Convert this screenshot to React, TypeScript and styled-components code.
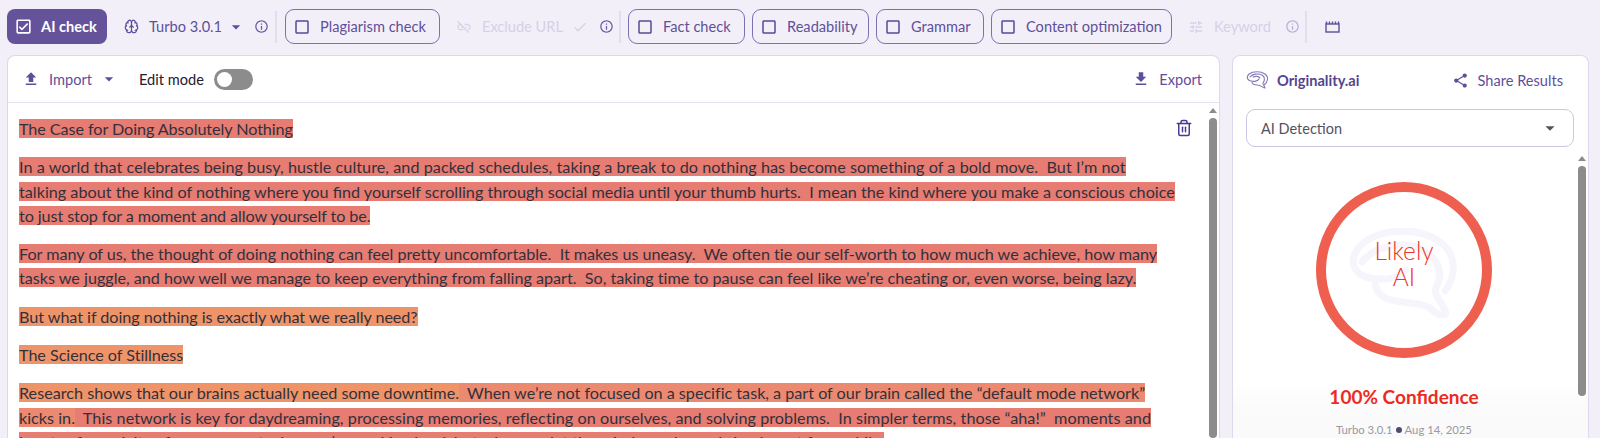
import React from "react";
import styled, { createGlobalStyle } from "styled-components";
import {
  MdArrowDropDown,
  MdCheck,
  MdCheckBoxOutlineBlank,
  MdFileDownload,
  MdFileUpload,
  MdInfoOutline,
  MdLinkOff,
  MdOutlineCheckBox,
  MdShare,
  MdTune,
} from "react-icons/md";
import { Brain, Trash2 } from "lucide-react";

const GlobalStyle = createGlobalStyle`
  html, body {
    margin: 0;
    padding: 0;
    height: 438px;
    overflow: hidden;
    background: #f2eff8;
    font-family: "Lato", "Open Sans", sans-serif;
  }
`;

const Page = styled.div`
  width: 1600px;
  height: 438px;
  overflow: hidden;
  background: #f2eff8;
`;

const Toolbar = styled.div`
  height: 55px;
  box-sizing: border-box;
  padding: 9px 0 0 7px;
  display: flex;
  align-items: flex-start;
  color: #5f4f9a;
  font-size: 14.6px;
`;

const PrimaryButton = styled.div`
  width: 100px;
  height: 35px;
  box-sizing: border-box;
  padding-left: 7px;
  border-radius: 8px;
  background: #64529a;
  color: #fff;
  font-weight: 700;
  display: flex;
  align-items: center;
  gap: 8px;
`;

const ToolGroup = styled.div<{ $width: number; $faded?: boolean; $pad?: number }>`
  width: ${(p) => p.$width}px;
  height: 35px;
  box-sizing: border-box;
  padding-left: ${(p) => p.$pad ?? 16}px;
  display: flex;
  align-items: center;
  flex-shrink: 0;
  color: ${(p) => (p.$faded ? "#d6d1e6" : "#5f4f9a")};
`;

const GroupLabel = styled.span<{ $width: number }>`
  width: ${(p) => p.$width}px;
  white-space: nowrap;
`;

const InfoIcon = styled(MdInfoOutline)<{ $faded?: boolean }>`
  font-size: 15px;
  flex-shrink: 0;
  color: ${(p) => (p.$faded ? "#b9b0d8" : "#6a5aa5")};
`;

const Divider = styled.div`
  width: 2px;
  height: 32px;
  margin-top: 2px;
  background: #e2deef;
  flex-shrink: 0;
`;

const Chip = styled.div<{ $width: number; $gap?: number }>`
  width: ${(p) => p.$width}px;
  height: 35px;
  box-sizing: border-box;
  margin-left: ${(p) => p.$gap ?? 7}px;
  padding-left: 7px;
  border: 1px solid #7f70b2;
  border-radius: 9px;
  display: flex;
  align-items: center;
  gap: 9px;
  flex-shrink: 0;
  white-space: nowrap;
`;

const ChipBox = styled(MdCheckBoxOutlineBlank)`
  font-size: 18px;
  color: #5a4a98;
  flex-shrink: 0;
`;

const Panels = styled.div`
  display: flex;
  gap: 12px;
  padding-left: 7px;
`;

const Card = styled.section<{ $width: number }>`
  width: ${(p) => p.$width}px;
  height: 400px;
  box-sizing: border-box;
  background: #fff;
  border: 1px solid #dcd8ee;
  border-bottom: 0;
  border-radius: 8px 8px 0 0;
  overflow: hidden;
  display: flex;
  flex-direction: column;
  position: relative;
`;

const EditorHeader = styled.header`
  height: 47px;
  box-sizing: border-box;
  flex-shrink: 0;
  padding: 0 17px 0 14px;
  border-bottom: 1px solid #e4e1f2;
  display: flex;
  align-items: center;
  font-size: 14.6px;
  color: #5f4f9a;
`;

const HeaderAction = styled.div<{ $gap: number }>`
  display: flex;
  align-items: center;
  gap: ${(p) => p.$gap}px;
`;

const EditLabel = styled.span`
  margin-left: 20px;
  color: #23202e;
`;

const Toggle = styled.div`
  width: 39px;
  height: 21px;
  margin-left: 10px;
  padding-left: 3px;
  box-sizing: border-box;
  border-radius: 11px;
  background: #8c8c8c;
  display: flex;
  align-items: center;
`;

const Knob = styled.div`
  width: 15px;
  height: 15px;
  border-radius: 50%;
  background: #fff;
`;

const Spacer = styled.div`
  flex: 1;
`;

const EditorBody = styled.div`
  flex: 1;
  display: flex;
  min-height: 0;
`;

const Document = styled.div`
  flex: 1;
  padding: 14px 0 0 11px;
  font-size: 16.2px;
  line-height: 24.3px;
  color: #33303a;
  white-space: pre;
`;

const Paragraph = styled.p`
  margin: 0 0 14px;
`;

const Mark = styled.span<{ $tone: "red" | "orange" | "mix"; $track?: number }>`
  letter-spacing: ${(p) => p.$track ?? 0}px;
  background: ${(p) =>
    p.$tone === "red" ? "#e77c72" : p.$tone === "orange" ? "#ef9469" : "#eb8a70"};
`;

const TrashButton = styled.div`
  position: absolute;
  top: 63px;
  left: 1167px;
  color: #4a3a92;
  display: flex;
`;

const Scrollbar = styled.div`
  width: 8px;
  margin-right: 2px;
  flex-shrink: 0;
  display: flex;
  flex-direction: column;
  align-items: center;
`;

const ScrollArrow = styled.div`
  width: 0;
  height: 0;
  margin-top: 5px;
  border-left: 4px solid transparent;
  border-right: 4px solid transparent;
  border-bottom: 5px solid #8c8c8c;
`;

const ScrollThumb = styled.div<{ $height: number }>`
  width: 8px;
  height: ${(p) => p.$height}px;
  margin-top: 5px;
  border-radius: 4px;
  background: #8c8c8c;
`;

const ResultHeader = styled.header`
  display: flex;
  align-items: center;
  height: 34px;
  margin-top: 7px;
  padding: 0 25px 0 13px;
  flex-shrink: 0;
  font-size: 14.6px;
  color: #5f4f9a;
`;

const Brand = styled.span`
  margin-left: 8px;
  font-weight: 700;
  color: #54448f;
`;

const SelectBox = styled.div`
  height: 36px;
  margin: 12px 14px 0 13px;
  padding: 0 12px 0 14px;
  flex-shrink: 0;
  border: 1px solid #cbc5e6;
  border-radius: 9px;
  display: flex;
  align-items: center;
  justify-content: space-between;
  font-size: 14.5px;
  color: #55525f;
`;

const ResultBody = styled.div`
  flex: 1;
  display: flex;
  min-height: 0;
  margin-top: 4px;
  background: linear-gradient(#fff 230px, #fafafa 260px);
`;

const ResultScroll = styled.div`
  flex: 1;
  display: flex;
  flex-direction: column;
  align-items: center;
  padding-top: 31px;
  padding-right: 3px;
`;

const Ring = styled.div`
  width: 176px;
  height: 176px;
  box-sizing: border-box;
  border: 10px solid #ee5f50;
  border-radius: 50%;
  flex-shrink: 0;
  position: relative;
  display: flex;
  flex-direction: column;
  align-items: center;
  justify-content: center;
  color: #ef3328;
  font-size: 24.5px;
  font-weight: 300;
  line-height: 26px;
`;

const Watermark = styled.div`
  position: absolute;
  top: 36px;
  left: 22px;
  display: flex;
`;

const VerdictLine = styled.span`
  position: relative;
  top: -6px;
`;

const Confidence = styled.div`
  margin-top: 27px;
  color: #ee2a1f;
  font-size: 19px;
  font-weight: 700;
`;

const Meta = styled.div`
  margin-top: 15px;
  display: flex;
  align-items: center;
  gap: 3px;
  font-size: 11.3px;
  color: #9a98a2;
`;

const MetaDot = styled.span`
  width: 6px;
  height: 6px;
  border-radius: 50%;
  background: #4f4a6e;
`;

const Clapper = () => (
  <svg width="15" height="13" viewBox="0 0 15 13" fill="none" stroke="#5f4f9a" strokeWidth="1.4">
    <rect x="1" y="4" width="13" height="8" />
    <path d="M1.5 4V1.5M4.5 4V1.5M7.5 4V1.5M10.5 4V1.5M13.5 4V1.5" />
  </svg>
);

const BrainMark = () => (
  <svg width="112" height="90" viewBox="0 0 112 90" fill="none" stroke="#f6f5fb" strokeWidth="7" strokeLinecap="round">
    <path d="M97 63C108 48 110 28 92 14C70 -2 30 0 12 18C0 32 4 46 22 50C38 53 52 50 58 42" />
    <path d="M14 34C26 18 56 12 74 22C94 32 94 48 88 60C84 66 96 76 98 85C96 89 88 87 82 80C70 72 40 78 30 64C28 60 27 56 27 54" />
  </svg>
);

const LogoMark = styled.svg`
  flex-shrink: 0;
`;

const Logo = () => (
  <LogoMark width="23" height="18" viewBox="0 0 23 18" fill="none" stroke="#8679b6" strokeWidth="1.1" strokeLinecap="round">
    <path d="M18 14C22 11 23 6 19 3C15 0 7 0 3 3C0 6 1 9 5 10C8 11 12 10 13 8" />
    <path d="M4 6C6 3 12 2 16 4C19 6 19 9 17 12C16 13 19 15 19 17C17 17 15 14 11 14C8 14 6 13 6 11" />
    <path d="M7 6C9 5 13 5 14 7" />
  </LogoMark>
);

const Caret = styled(MdArrowDropDown)<{ $size?: number; $color?: string }>`
  font-size: ${(p) => p.$size ?? 22}px;
  color: ${(p) => p.$color ?? "inherit"};
  flex-shrink: 0;
`;

export default function App() {
  return (
    <Page>
      <GlobalStyle />
      <Toolbar>
        <PrimaryButton>
          <MdOutlineCheckBox size={19} />
          AI check
        </PrimaryButton>
        <ToolGroup $width={168} $pad={17}>
          <Brain size={15} strokeWidth={2} style={{ marginRight: 10 }} />
          <GroupLabel $width={72}>Turbo 3.0.1</GroupLabel>
          <Caret $size={20} style={{ marginLeft: 5, marginRight: 8 }} />
          <InfoIcon />
        </ToolGroup>
        <Divider />
        <Chip $width={155} $gap={8}>
          <ChipBox />
          Plagiarism check
        </Chip>
        <ToolGroup $width={179} $faded>
          <MdLinkOff size={16} style={{ marginRight: 10 }} />
          <GroupLabel $width={90}>Exclude URL</GroupLabel>
          <MdCheck size={16} style={{ marginRight: 11 }} />
          <InfoIcon />
        </ToolGroup>
        <Divider />
        <Chip $width={117}>
          <ChipBox />
          Fact check
        </Chip>
        <Chip $width={117}>
          <ChipBox />
          Readability
        </Chip>
        <Chip $width={108}>
          <ChipBox />
          Grammar
        </Chip>
        <Chip $width={181}>
          <ChipBox />
          Content optimization
        </Chip>
        <ToolGroup $width={133} $faded>
          <MdTune size={16} style={{ marginRight: 10 }} />
          <GroupLabel $width={71}>Keyword</GroupLabel>
          <InfoIcon $faded />
        </ToolGroup>
        <Divider />
        <ToolGroup $width={40} $pad={18}>
          <Clapper />
        </ToolGroup>
      </Toolbar>
      <Panels>
        <Card $width={1213}>
          <EditorHeader>
            <HeaderAction $gap={9}>
              <MdFileUpload size={18} />
              Import
              <Caret $size={20} style={{ marginLeft: -2 }} />
            </HeaderAction>
            <EditLabel>Edit mode</EditLabel>
            <Toggle>
              <Knob />
            </Toggle>
            <Spacer />
            <HeaderAction $gap={9}>
              <MdFileDownload size={18} />
              Export
            </HeaderAction>
          </EditorHeader>
          <EditorBody>
            <Document>
              <Paragraph>
                <Mark $tone="red" $track={-0.08}>The Case for Doing Absolutely Nothing</Mark>
              </Paragraph>
              <Paragraph>
                <Mark $tone="red" $track={0.043}>In a world that celebrates being busy, hustle culture, and packed schedules, taking a break to do nothing has become something of a bold move.  But I’m not</Mark>
                <br />
                <Mark $tone="red">talking about the kind of nothing where you find yourself scrolling through social media until your thumb hurts.  I mean the kind where you make a conscious choice</Mark>
                <br />
                <Mark $tone="red" $track={-0.1}>to just stop for a moment and allow yourself to be.</Mark>
              </Paragraph>
              <Paragraph>
                <Mark $tone="red" $track={-0.025}>For many of us, the thought of doing nothing can feel pretty uncomfortable.  It makes us uneasy.  We often tie our self-worth to how much we achieve, how many</Mark>
                <br />
                <Mark $tone="red" $track={-0.02}>tasks we juggle, and how well we manage to keep everything from falling apart.  So, taking time to pause can feel like we’re cheating or, even worse, being lazy.</Mark>
              </Paragraph>
              <Paragraph>
                <Mark $tone="orange" $track={-0.055}>But what if doing nothing is exactly what we really need?</Mark>
              </Paragraph>
              <Paragraph>
                <Mark $tone="orange" $track={-0.04}>The Science of Stillness</Mark>
              </Paragraph>
              <Paragraph>
                <Mark $tone="orange">Research shows that our brains actually need some downtime.</Mark>
                <Mark $tone="mix" $track={-0.02}>  When we’re not focused on a specific task, a part of our brain called the “default mode network”</Mark>
                <br />
                <Mark $tone="mix">kicks in.</Mark>
                <Mark $tone="red" $track={0.05}>  This network is key for daydreaming, processing memories, reflecting on ourselves, and solving problems.  In simpler terms, those “aha!”  moments and</Mark>
                <br />
                <Mark $tone="red">bursts of creativity often come not when we’re working hard, but when we let the mind wander and simply rest for a while.</Mark>
              </Paragraph>
            </Document>
            <Scrollbar>
              <ScrollArrow />
              <ScrollThumb $height={320} />
            </Scrollbar>
          </EditorBody>
          <TrashButton>
            <Trash2 size={18} strokeWidth={2} />
          </TrashButton>
        </Card>
        <Card $width={357}>
          <ResultHeader>
            <Logo />
            <Brand>Originality.ai</Brand>
            <Spacer />
            <HeaderAction $gap={9}>
              <MdShare size={17} />
              Share Results
            </HeaderAction>
          </ResultHeader>
          <SelectBox>
            AI Detection
            <Caret $color="#555" />
          </SelectBox>
          <ResultBody>
            <ResultScroll>
              <Ring>
                <Watermark>
                  <BrainMark />
                </Watermark>
                <VerdictLine>Likely</VerdictLine>
                <VerdictLine>AI</VerdictLine>
              </Ring>
              <Confidence>100% Confidence</Confidence>
              <Meta>
                Turbo 3.0.1
                <MetaDot />
                Aug 14, 2025
              </Meta>
            </ResultScroll>
            <Scrollbar>
              <ScrollArrow />
              <ScrollThumb $height={230} />
            </Scrollbar>
          </ResultBody>
        </Card>
      </Panels>
    </Page>
  );
}
